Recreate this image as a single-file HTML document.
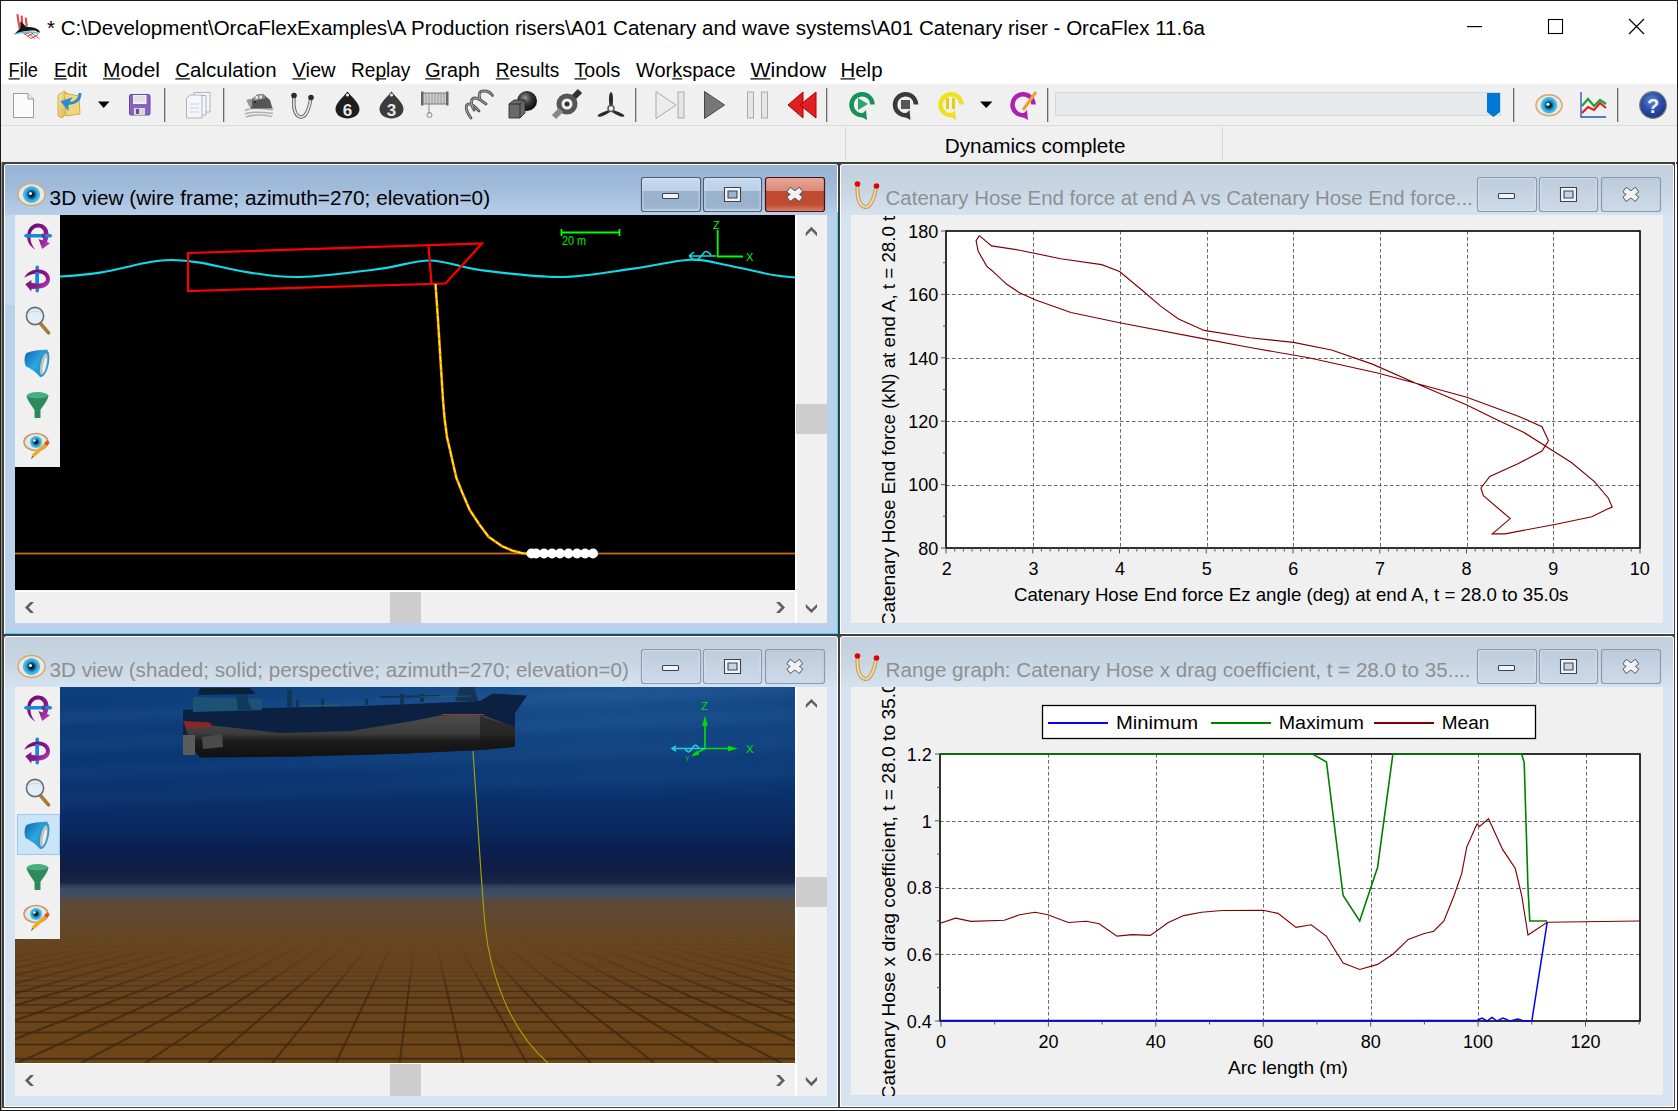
<!DOCTYPE html>
<html><head><meta charset="utf-8"><title>OrcaFlex</title>
<style>html,body{margin:0;padding:0;background:#f0f0f0;overflow:hidden;}svg{display:block;font-family:"Liberation Sans",sans-serif;}</style>
</head><body>
<svg width="1678" height="1111" viewBox="0 0 1678 1111">

<defs>
<linearGradient id="gActT" x1="0" y1="0" x2="0" y2="1">
 <stop offset="0" stop-color="#98b3d4"/><stop offset="0.5" stop-color="#a2bcdb"/><stop offset="1" stop-color="#b8cfe8"/></linearGradient>
<linearGradient id="gInT" x1="0" y1="0" x2="0" y2="1">
 <stop offset="0" stop-color="#c2d0de"/><stop offset="0.5" stop-color="#c8d6e4"/><stop offset="1" stop-color="#d5e3f0"/></linearGradient>
<linearGradient id="gActSide" x1="0" y1="0" x2="0" y2="1">
 <stop offset="0" stop-color="#c3d8ee"/><stop offset="0.25" stop-color="#b8d0ea"/><stop offset="1" stop-color="#b9d1ea"/></linearGradient>
<linearGradient id="gBtnA" x1="0" y1="0" x2="0" y2="1">
 <stop offset="0" stop-color="#c6d8ec"/><stop offset="0.4" stop-color="#bcd0e6"/><stop offset="0.41" stop-color="#9ab3cf"/><stop offset="0.85" stop-color="#9ab2ce"/><stop offset="1" stop-color="#b4cae2"/></linearGradient>
<linearGradient id="gBtnI" x1="0" y1="0" x2="0" y2="1">
 <stop offset="0" stop-color="#bccbdb"/><stop offset="0.5" stop-color="#c5d3e2"/><stop offset="1" stop-color="#cbd9e8"/></linearGradient>
<linearGradient id="gClose" x1="0" y1="0" x2="0" y2="1">
 <stop offset="0" stop-color="#eba799"/><stop offset="0.4" stop-color="#d98a7a"/><stop offset="0.41" stop-color="#bd4a2e"/><stop offset="0.8" stop-color="#c04c32"/><stop offset="1" stop-color="#d88672"/></linearGradient>
<linearGradient id="gSea" gradientUnits="userSpaceOnUse" x1="0" y1="687" x2="0" y2="885">
 <stop offset="0" stop-color="#0c3f7c"/><stop offset="0.45" stop-color="#0a3672"/><stop offset="0.68" stop-color="#0a2a62"/><stop offset="0.83" stop-color="#0b1f4e"/><stop offset="0.93" stop-color="#111d42"/><stop offset="1" stop-color="#1c2848"/></linearGradient>
<linearGradient id="gBed" x1="0" y1="0" x2="0" y2="1">
 <stop offset="0" stop-color="#5c4a3a"/><stop offset="0.25" stop-color="#624426"/><stop offset="1" stop-color="#6e4515"/></linearGradient>
<linearGradient id="gHull" x1="0" y1="0" x2="0" y2="1">
 <stop offset="0" stop-color="#4c4c4c"/><stop offset="0.45" stop-color="#3c3c3c"/><stop offset="0.62" stop-color="#1c1c1c"/><stop offset="1" stop-color="#101010"/></linearGradient>
<radialGradient id="gEye" cx="0.5" cy="0.5" r="0.5">
 <stop offset="0" stop-color="#000"/><stop offset="0.3" stop-color="#0a3050"/><stop offset="0.55" stop-color="#1a8fc8"/><stop offset="0.8" stop-color="#49b8e0"/><stop offset="1" stop-color="#49b8e0"/></radialGradient>
<radialGradient id="gBall" cx="0.4" cy="0.35" r="0.6">
 <stop offset="0" stop-color="#9a9a9a"/><stop offset="0.5" stop-color="#3a3a3a"/><stop offset="1" stop-color="#111"/></radialGradient>
<radialGradient id="gHelp" cx="0.45" cy="0.35" r="0.6">
 <stop offset="0" stop-color="#5a86d8"/><stop offset="0.6" stop-color="#2a4ea8"/><stop offset="1" stop-color="#1a3a8a"/></radialGradient>
<linearGradient id="gFolder" x1="0" y1="0" x2="1" y2="1">
 <stop offset="0" stop-color="#f8e9a0"/><stop offset="1" stop-color="#d9b24a"/></linearGradient>
<linearGradient id="gTrack" x1="0" y1="0" x2="0" y2="1">
 <stop offset="0" stop-color="#e7eaea"/><stop offset="1" stop-color="#e7eaea"/></linearGradient>
<linearGradient id="gFog" x1="0" y1="0" x2="0" y2="1">
 <stop offset="0" stop-color="#5a4a3c" stop-opacity="1"/><stop offset="0.25" stop-color="#62482c" stop-opacity="1"/><stop offset="0.5" stop-color="#67461f" stop-opacity="0.9"/><stop offset="0.75" stop-color="#6a4518" stop-opacity="0.55"/><stop offset="1" stop-color="#6a4518" stop-opacity="0"/></linearGradient>
<linearGradient id="gBand" x1="0" y1="0" x2="0" y2="1">
 <stop offset="0" stop-color="#273552"/><stop offset="0.3" stop-color="#3c4b63"/><stop offset="0.75" stop-color="#414e62"/><stop offset="1" stop-color="#504a42"/></linearGradient>
<radialGradient id="gGlow" cx="0.75" cy="0" r="0.6">
 <stop offset="0" stop-color="#3a7ab8" stop-opacity="0.32"/><stop offset="1" stop-color="#2a6aa8" stop-opacity="0"/></radialGradient>
<linearGradient id="gPurp" x1="0" y1="0" x2="1" y2="1">
 <stop offset="0" stop-color="#6a0a6a"/><stop offset="0.6" stop-color="#8a1a8a"/><stop offset="1" stop-color="#d050d0"/></linearGradient>
<linearGradient id="gMeg" x1="0" y1="0" x2="1" y2="1">
 <stop offset="0" stop-color="#1060a8"/><stop offset="0.5" stop-color="#2aa8e0"/><stop offset="1" stop-color="#1a80c0"/></linearGradient>
<filter id="blur5" x="-10%" y="-50%" width="120%" height="200%"><feGaussianBlur stdDeviation="5"/></filter>
<clipPath id="clipTLv"><rect x="15" y="215" width="780" height="375"/></clipPath>
<clipPath id="clipBLv"><rect x="15" y="687" width="780" height="376"/></clipPath>
<clipPath id="clipTRc"><rect x="851" y="215" width="812" height="408"/></clipPath>
<clipPath id="clipBRc"><rect x="851" y="687" width="812" height="409"/></clipPath>
</defs>

<rect x="0" y="0" width="1678" height="1111" fill="#f0f0f0"/>
<rect x="0" y="0" width="1678" height="84" fill="#ffffff"/>
<rect x="0" y="125" width="1678" height="1" fill="#dadada"/>
<rect x="845" y="127" width="1" height="33" fill="#d7d7d7"/>
<rect x="1222" y="127" width="1" height="33" fill="#d7d7d7"/>
<rect x="2" y="162" width="1675" height="948" fill="#ffffff"/>
<rect x="2" y="162" width="1675" height="2" fill="#404040"/>
<rect x="0.5" y="0.5" width="1677" height="1110" fill="none" stroke="#1a1a1a" stroke-width="1"/>
<rect x="1" y="162" width="1" height="948" fill="#9a9a9a"/>
<g>
<path d="M17.4,14.2 C18,20 19,25 19.7,28.5 M21.6,15.6 L22.3,24 M25.8,17.6 C26,21 26.5,24 26.8,26.5" stroke="#e04a4a" stroke-width="2.1" fill="none"/>
<path d="M23,32.8 L31,38.5 M26.5,32.2 L35,38.6 M30,31.8 L39.5,38.8 M24.5,34.5 L29,32 M27.5,36.5 L33.5,33 M31,38.5 L38,34.5" stroke="#cc4a4a" stroke-width="1" fill="none"/>
<path d="M14.2,33.9 C17,31.5 19.5,29.5 20.3,27.8 C20.6,25.5 20.3,23 20.3,21.3 C22.5,23 24.5,25 26,26.8 C30,27 34,27.5 36,28.5 C38.5,29.5 40,31 39.8,32.8 C38,32.3 36.5,31.2 34.5,30.5 C30,30 24,31 14.2,33.9 Z" fill="#161616"/>
<path d="M14.5,34.2 C22,31.8 30,31 38.8,33.3" stroke="#58c6de" stroke-width="1.4" fill="none"/>
</g>
<text x="47.0" y="34.8" font-size="20.5" fill="#000" textLength="1158.0" lengthAdjust="spacingAndGlyphs">* C:\Development\OrcaFlexExamples\A Production risers\A01 Catenary and wave systems\A01 Catenary riser - OrcaFlex 11.6a</text>
<rect x="1467" y="26" width="15" height="1.2" fill="#000"/>
<rect x="1548.5" y="19.5" width="14" height="14" fill="none" stroke="#000" stroke-width="1.1"/>
<path d="M1629,19 L1644,34 M1644,19 L1629,34" stroke="#000" stroke-width="1.2"/>
<text x="8.6" y="76.8" font-size="20.5" fill="#000" textLength="29.4" lengthAdjust="spacingAndGlyphs">File</text>
<rect x="8.6" y="78.3" width="11.1" height="1.2" fill="#000"/>
<text x="54.0" y="76.8" font-size="20.5" fill="#000" textLength="33.0" lengthAdjust="spacingAndGlyphs">Edit</text>
<rect x="54.0" y="78.3" width="12.8" height="1.2" fill="#000"/>
<text x="103.0" y="76.8" font-size="20.5" fill="#000" textLength="57.0" lengthAdjust="spacingAndGlyphs">Model</text>
<rect x="103.0" y="78.3" width="17.4" height="1.2" fill="#000"/>
<text x="175.3" y="76.8" font-size="20.5" fill="#000" textLength="101.3" lengthAdjust="spacingAndGlyphs">Calculation</text>
<rect x="175.3" y="78.3" width="14.8" height="1.2" fill="#000"/>
<text x="292.4" y="76.8" font-size="20.5" fill="#000" textLength="43.2" lengthAdjust="spacingAndGlyphs">View</text>
<rect x="292.4" y="78.3" width="13.4" height="1.2" fill="#000"/>
<text x="351.0" y="76.8" font-size="20.5" fill="#000" textLength="59.4" lengthAdjust="spacingAndGlyphs">Replay</text>
<rect x="375.4" y="78.3" width="10.6" height="1.2" fill="#000"/>
<text x="425.2" y="76.8" font-size="20.5" fill="#000" textLength="54.8" lengthAdjust="spacingAndGlyphs">Graph</text>
<rect x="425.2" y="78.3" width="15.3" height="1.2" fill="#000"/>
<text x="495.8" y="76.8" font-size="20.5" fill="#000" textLength="63.5" lengthAdjust="spacingAndGlyphs">Results</text>
<rect x="495.8" y="78.3" width="13.7" height="1.2" fill="#000"/>
<text x="574.5" y="76.8" font-size="20.5" fill="#000" textLength="45.7" lengthAdjust="spacingAndGlyphs">Tools</text>
<rect x="574.5" y="78.3" width="12.0" height="1.2" fill="#000"/>
<text x="636.0" y="76.8" font-size="20.5" fill="#000" textLength="99.5" lengthAdjust="spacingAndGlyphs">Workspace</text>
<rect x="672.2" y="78.3" width="10.0" height="1.2" fill="#000"/>
<text x="750.4" y="76.8" font-size="20.5" fill="#000" textLength="75.8" lengthAdjust="spacingAndGlyphs">Window</text>
<rect x="750.4" y="78.3" width="20.1" height="1.2" fill="#000"/>
<text x="840.5" y="76.8" font-size="20.5" fill="#000" textLength="42.0" lengthAdjust="spacingAndGlyphs">Help</text>
<rect x="840.5" y="78.3" width="14.7" height="1.2" fill="#000"/>
<rect x="164" y="88" width="1.3" height="34" fill="#6a6a6a"/>
<rect x="223" y="88" width="1.3" height="34" fill="#6a6a6a"/>
<rect x="635" y="88" width="1.3" height="34" fill="#6a6a6a"/>
<rect x="826" y="88" width="1.3" height="34" fill="#6a6a6a"/>
<rect x="1047" y="88" width="1.3" height="34" fill="#6a6a6a"/>
<rect x="1513" y="88" width="1.3" height="34" fill="#6a6a6a"/>
<rect x="1617" y="88" width="1.3" height="34" fill="#6a6a6a"/>
<path d="M13.5,93.5 H28 L33.5,99 V117.5 H13.5 Z" fill="#fbfbfb" stroke="#9a9a9a"/><path d="M28,93.5 V99 H33.5" fill="#e8e8e8" stroke="#9a9a9a"/>
<path d="M58,95 L64,91 L67,93 L67,113 L62,118 L58,116 Z" fill="url(#gFolder)" stroke="#c9a23a" stroke-width="0.8"/><path d="M64,93 L79,96 L80,114 L66,116 Z" fill="#f2d67a" stroke="#c9a23a" stroke-width="0.8"/><path d="M80,93 C80,101 74,104 67,103 L69,100 L63,102 L67,107 L67,104" stroke="#2a8ad8" stroke-width="3" fill="none"/>
<path d="M98,101.5 H109.5 L103.7,108 Z" fill="#000"/>
<rect x="129.5" y="94.5" width="20.5" height="20.5" rx="1.5" fill="#8a62c0" stroke="#6a4aa0"/><rect x="133" y="95" width="13.5" height="9" fill="#f2f2f2"/><path d="M134,97 H145 M134,99 H145 M134,101 H145" stroke="#c9c9c9" stroke-width="0.8"/><rect x="134" y="108" width="11" height="7" fill="#d8d8d8"/><rect x="136" y="109" width="3" height="5" fill="#6a4aa0"/>
<g fill="#f4f6fa" stroke="#a6acb8" stroke-width="0.9"><path d="M194,92.5 H210 V112 H194 Z"/><path d="M190,95.5 H206 V115 H190 Z"/><path d="M186.5,98.5 L190,95 H202 V118 H186.5 Z"/></g><path d="M190,104 H199 M190,108 H199 M190,112 H199" stroke="#c6cbd6" stroke-width="0.8"/>
<g><path d="M245,110.5 C251,107.5 262,108 273,110 M245,114 C252,111 262,112 273,113.5 M246,117 C254,114 264,115 272,116.5" stroke="#b0b0b0" stroke-width="1.6" fill="none"/><path d="M246.5,100 L252,99 L257,95 L263,94 L270,100 L272,107 L273,108.5 L251,108.5 Z" fill="#555"/><path d="M252,99 L257,94.5 L263,94 L266,98 L254,101 Z" fill="#8a8a8a"/><rect x="255.5" y="96" width="2.5" height="3" fill="#e8e8e8"/><rect x="259.5" y="95.5" width="2.5" height="3" fill="#e8e8e8"/><path d="M246.5,100 L252,99 L252,107 L249,106 Z" fill="#9a9a9a"/><circle cx="255" cy="102" r="0.9" fill="#111"/></g>
<path d="M294,95.5 C293.5,106 293.5,112 298,116 C303,119 308,116 311,97.5" stroke="#6a6a6a" stroke-width="3.6" fill="none"/><path d="M294,95.5 C293.5,106 293.5,112 298,116 C303,119 308,116 311,97.5" stroke="#e6e6e6" stroke-width="1.6" fill="none"/><circle cx="294" cy="95.5" r="2.8" fill="#2a2a2a"/><circle cx="311" cy="97.5" r="2.8" fill="#2a2a2a"/>
<path d="M347.5,91.5 C343.5,97 335.5,103 335.5,109 C335.5,115 341.5,118.5 347.5,118.5 C353.5,118.5 359.5,115 359.5,109 C359.5,103 351.5,97 347.5,91.5 Z" fill="#1e1e1e"/>
<circle cx="347.5" cy="95" r="1.6" fill="#eee"/>
<text x="347.5" y="116" font-size="17" font-weight="bold" fill="#e8e8e8" text-anchor="middle">6</text>
<path d="M391.5,91.5 C387.5,97 379.5,103 379.5,109 C379.5,115 385.5,118.5 391.5,118.5 C397.5,118.5 403.5,115 403.5,109 C403.5,103 395.5,97 391.5,91.5 Z" fill="#3c3c3c"/>
<circle cx="391.5" cy="95" r="1.6" fill="#eee"/>
<text x="391.5" y="116" font-size="17" font-weight="bold" fill="#e8e8e8" text-anchor="middle">3</text>
<rect x="422" y="93" width="25" height="11" rx="2" fill="#cfcfcf" stroke="#777"/><path d="M426,93 V104 M429,93 V104 M432,93 V104 M435,93 V104 M438,93 V104 M441,93 V104 M444,93 V104" stroke="#8a8a8a" stroke-width="0.8"/><rect x="421" y="91.5" width="2.5" height="14" fill="#666"/><rect x="446" y="91.5" width="2.5" height="14" fill="#666"/><path d="M429,104 V114" stroke="#888"/><circle cx="429.5" cy="115" r="2.5" fill="none" stroke="#888"/>
<path d="M471,118 C465,110 465,104 469,104 C473,104 477,109 479,111 M474,110 C470,103 471,98 475,98 C479,98 483,102 486,104 M480,99 C478,93 480,91 484,91 C488,91 491,93 492.5,95.5" stroke="#555" stroke-width="2.8" fill="none" stroke-linecap="round"/><path d="M471,118 C465,110 465,104 469,104 C473,104 477,109 479,111 M474,110 C470,103 471,98 475,98 C479,98 483,102 486,104 M480,99 C478,93 480,91 484,91 C488,91 491,93 492.5,95.5" stroke="#aaa" stroke-width="1" fill="none"/>
<circle cx="527" cy="101" r="10" fill="url(#gBall)"/><path d="M509,104 L514,100 H525 V113 L520,118 H509 Z" fill="#6a6a6a" stroke="#222" stroke-width="0.8"/><path d="M509,104 H520 V118 M520,104 L525,100" stroke="#222" stroke-width="0.8" fill="none"/>
<circle cx="567" cy="104" r="8" fill="none" stroke="#555" stroke-width="5"/><circle cx="567" cy="104" r="2.5" fill="#333"/><path d="M574,97 L580,91" stroke="#333" stroke-width="6"/><path d="M561,110 L554,117" stroke="#888" stroke-width="6"/>
<g fill="#2a2a2a"><path d="M609.5,106 C608.5,98 609,93 611,92 C613,93 613.5,98 612.5,106 Z"/><path d="M613,110 C619,112 624,114 624.5,116 C623,118 618,116 612,112 Z"/><path d="M609,110 C603,112 598,114 597.5,116 C599,118 604,116 610,112 Z"/></g><circle cx="611" cy="108.5" r="3" fill="#f0f0f0" stroke="#555" stroke-width="1.5"/>
<path d="M656,91.5 L676,105 L656,118.5 Z" fill="#ececec" stroke="#aaa"/><rect x="678" y="92" width="6" height="26" fill="#e6e6e6" stroke="#aaa"/>
<path d="M704.5,91.5 L724.5,105 L704.5,118.5 Z" fill="#777" stroke="#444"/>
<rect x="747.5" y="92" width="6" height="26" fill="#e6e6e6" stroke="#aaa"/><rect x="761.5" y="92" width="6" height="26" fill="#e6e6e6" stroke="#aaa"/>
<path d="M788,105 L803,92 V118 Z" fill="#e02020" stroke="#a00"/><path d="M800,105 L816,92 V118 Z" fill="#e02020" stroke="#a00"/>
<path d="M872.5,104.5 A10.5,10.5 0 1,0 864,115" stroke="#18905a" stroke-width="4.5" fill="none"/><path d="M866,110 L860,116 L867,120 Z" fill="#18905a"/>
<path d="M858,98 L868,104 L858,110 Z" fill="#2aa86a"/>
<path d="M916.0,104.5 A10.5,10.5 0 1,0 907.5,115" stroke="#3a3a3a" stroke-width="4.5" fill="none"/><path d="M909.5,110 L903.5,116 L910.5,120 Z" fill="#3a3a3a"/>
<rect x="901" y="100" width="9" height="9" fill="#555"/>
<path d="M961.5,104.5 A10.5,10.5 0 1,0 953,115" stroke="#f0e020" stroke-width="4.5" fill="none"/><path d="M955,110 L949,116 L956,120 Z" fill="#f0e020"/>
<rect x="946" y="98" width="3" height="11" fill="#e0d010"/><rect x="952" y="98" width="3" height="11" fill="#e0d010"/>
<path d="M980,101.5 H992.5 L986.2,108 Z" fill="#000"/>
<path d="M1033.5,104.5 A10.5,10.5 0 1,0 1025,115" stroke="#b020b0" stroke-width="4.5" fill="none"/><path d="M1027,110 L1021,116 L1028,120 Z" fill="#b020b0"/>
<path d="M1023,110 L1036,92" stroke="#f0a030" stroke-width="3"/>
<rect x="1055.5" y="92.5" width="445" height="23" fill="#e7eaea" stroke="#d6d6d6"/>
<path d="M1487,93 H1500 V112 L1493.5,117 L1487,112 Z" fill="#0078d7"/>
<ellipse cx="1549" cy="105.3" rx="13" ry="10.5" fill="#e8e8e8" stroke="#d8a868" stroke-width="1.5"/><circle cx="1549" cy="105.3" r="8.2" fill="url(#gEye)"/><circle cx="1548" cy="104.3" r="1.6" fill="#fff"/>
<path d="M1581,92 V117 H1606" stroke="#2050c0" stroke-width="1.3" fill="none"/><path d="M1582,106 L1588,99 L1594,106 L1600,100 L1606,104" stroke="#20a030" stroke-width="2.2" fill="none"/><path d="M1582,113 L1588,107 L1594,110 L1600,103 L1606,108" stroke="#e02020" stroke-width="2.2" fill="none"/>
<circle cx="1653" cy="105" r="13.3" fill="url(#gHelp)" stroke="#7a7a7a" stroke-width="1.2"/><text x="1653" y="112.5" font-size="20" font-weight="bold" fill="#f0f0f0" text-anchor="middle">?</text>
<text x="944.8" y="153.4" font-size="20.5" fill="#000" textLength="180.8" lengthAdjust="spacingAndGlyphs">Dynamics complete</text>
<rect x="2" y="162" width="838" height="474" rx="4" fill="#404040"/>
<rect x="2" y="182" width="838" height="454" fill="#404040"/>
<rect x="4" y="164" width="834" height="470" rx="3" fill="#ffffff"/>
<rect x="4" y="182" width="834" height="452" fill="#ffffff"/>
<rect x="837" y="212" width="1" height="422" fill="#38d8f8"/>
<rect x="5" y="633" width="833" height="1" fill="#38d8f8"/>
<rect x="5" y="165" width="832" height="468" rx="2" fill="#b9d1ea"/>
<rect x="5" y="182" width="832" height="451" fill="#b9d1ea"/>
<rect x="5" y="215" width="10" height="90" fill="#c6daef"/>
<rect x="5" y="165" width="832" height="50" rx="2" fill="url(#gActT)"/>
<ellipse cx="31.5" cy="194.5" rx="13.5" ry="11" fill="#e8e8e8" stroke="#d8a868" stroke-width="1.5"/><circle cx="31.5" cy="194.5" r="8.6" fill="url(#gEye)"/><circle cx="30.5" cy="193.5" r="1.6" fill="#fff"/>
<text x="49.6" y="204.5" font-size="20.5" fill="#000" textLength="440.5" lengthAdjust="spacingAndGlyphs">3D view (wire frame; azimuth=270; elevation=0)</text>
<rect x="641.5" y="177.5" width="59" height="34" rx="2.5" fill="url(#gBtnA)" stroke="#4d5d72" stroke-width="1.2"/>
<rect x="642.8" y="178.8" width="56.4" height="31.4" rx="1.5" fill="none" stroke="#e6eef8" stroke-opacity="0.6" stroke-width="1"/>
<rect x="703.5" y="177.5" width="58" height="34" rx="2.5" fill="url(#gBtnA)" stroke="#4d5d72" stroke-width="1.2"/>
<rect x="704.8" y="178.8" width="55.4" height="31.4" rx="1.5" fill="none" stroke="#e6eef8" stroke-opacity="0.6" stroke-width="1"/>
<rect x="662.5" y="193.5" width="16" height="5" rx="1" fill="#f4f4f4" stroke="#3a4456" stroke-width="1.1"/>
<path d="M724.5,187.5 h16 v14 h-16 Z M728,191 h9 v7 h-9 Z" fill="#f4f4f4" fill-rule="evenodd" stroke="#3a4456" stroke-width="1.1"/>
<rect x="765.5" y="177.5" width="59" height="34" rx="2.5" fill="url(#gClose)" stroke="#4a1018" stroke-width="1.2"/>
<polygon points="799.26,201.04 802.33,197.09 790.34,187.76 787.27,191.71" fill="#3a4456" stroke="#3a4456" stroke-width="1.3" stroke-linejoin="round"/>
<polygon points="787.27,197.09 790.34,201.04 802.33,191.71 799.26,187.76" fill="#3a4456" stroke="#3a4456" stroke-width="1.3" stroke-linejoin="round"/>
<polygon points="799.26,201.04 802.33,197.09 790.34,187.76 787.27,191.71" fill="#f2f2f2"/>
<polygon points="787.27,197.09 790.34,201.04 802.33,191.71 799.26,187.76" fill="#f2f2f2"/>
<rect x="15" y="215" width="812" height="408" fill="#f0f0f0"/>
<rect x="838" y="162" width="838" height="474" rx="4" fill="#404040"/>
<rect x="838" y="182" width="838" height="454" fill="#404040"/>
<rect x="840" y="164" width="834" height="470" rx="3" fill="#ffffff"/>
<rect x="840" y="182" width="834" height="452" fill="#ffffff"/>
<rect x="841" y="165" width="832" height="468" rx="2" fill="#d6e4f2"/>
<rect x="841" y="182" width="832" height="451" fill="#d6e4f2"/>
<rect x="841" y="165" width="832" height="50" rx="2" fill="url(#gInT)"/>
<path d="M857.5,184 C857,196 858,205 865,207 C871,208 874,198 876.5,186" stroke="#c8a060" stroke-width="4" fill="none"/>
<path d="M857.5,184 C857,196 858,205 865,207 C871,208 874,198 876.5,186" stroke="#f2dcae" stroke-width="1.6" fill="none"/>
<circle cx="857.5" cy="184" r="2.8" fill="#e00000"/><circle cx="876.5" cy="186" r="2.8" fill="#e00000"/>
<text x="885.6" y="204.5" font-size="20.5" fill="#8f8f8f" textLength="587.2" lengthAdjust="spacingAndGlyphs">Catenary Hose End force at end A vs Catenary Hose End force...</text>
<rect x="1477.5" y="177.5" width="59" height="34" rx="2.5" fill="url(#gBtnI)" stroke="#8a9ab0" stroke-width="1.2"/>
<rect x="1478.8" y="178.8" width="56.4" height="31.4" rx="1.5" fill="none" stroke="#e6eef8" stroke-opacity="0.6" stroke-width="1"/>
<rect x="1539.5" y="177.5" width="58" height="34" rx="2.5" fill="url(#gBtnI)" stroke="#8a9ab0" stroke-width="1.2"/>
<rect x="1540.8" y="178.8" width="55.4" height="31.4" rx="1.5" fill="none" stroke="#e6eef8" stroke-opacity="0.6" stroke-width="1"/>
<rect x="1498.5" y="193.5" width="16" height="5" rx="1" fill="#f4f4f4" stroke="#3a4456" stroke-width="1.1"/>
<path d="M1560.5,187.5 h16 v14 h-16 Z M1564,191 h9 v7 h-9 Z" fill="#f4f4f4" fill-rule="evenodd" stroke="#3a4456" stroke-width="1.1"/>
<rect x="1601.5" y="177.5" width="59" height="34" rx="2.5" fill="url(#gBtnI)" stroke="#8a9ab0" stroke-width="1.2"/>
<polygon points="1635.26,201.04 1638.33,197.09 1626.34,187.76 1623.27,191.71" fill="#3a4456" stroke="#3a4456" stroke-width="1.3" stroke-linejoin="round"/>
<polygon points="1623.27,197.09 1626.34,201.04 1638.33,191.71 1635.26,187.76" fill="#3a4456" stroke="#3a4456" stroke-width="1.3" stroke-linejoin="round"/>
<polygon points="1635.26,201.04 1638.33,197.09 1626.34,187.76 1623.27,191.71" fill="#f2f2f2"/>
<polygon points="1623.27,197.09 1626.34,201.04 1638.33,191.71 1635.26,187.76" fill="#f2f2f2"/>
<rect x="851" y="215" width="812" height="408" fill="#f0f0f0"/>
<rect x="2" y="634" width="838" height="474" rx="4" fill="#404040"/>
<rect x="2" y="654" width="838" height="454" fill="#404040"/>
<rect x="4" y="636" width="834" height="470" rx="3" fill="#ffffff"/>
<rect x="4" y="654" width="834" height="452" fill="#ffffff"/>
<rect x="5" y="637" width="832" height="468" rx="2" fill="#d6e4f2"/>
<rect x="5" y="654" width="832" height="451" fill="#d6e4f2"/>
<rect x="5" y="637" width="832" height="50" rx="2" fill="url(#gInT)"/>
<ellipse cx="31.5" cy="666.5" rx="13.5" ry="11" fill="#e8e8e8" stroke="#d8a868" stroke-width="1.5"/><circle cx="31.5" cy="666.5" r="8.6" fill="url(#gEye)"/><circle cx="30.5" cy="665.5" r="1.6" fill="#fff"/>
<text x="49.6" y="676.5" font-size="20.5" fill="#8f8f8f" textLength="579.3" lengthAdjust="spacingAndGlyphs">3D view (shaded; solid; perspective; azimuth=270; elevation=0)</text>
<rect x="641.5" y="649.5" width="59" height="34" rx="2.5" fill="url(#gBtnI)" stroke="#8a9ab0" stroke-width="1.2"/>
<rect x="642.8" y="650.8" width="56.4" height="31.4" rx="1.5" fill="none" stroke="#e6eef8" stroke-opacity="0.6" stroke-width="1"/>
<rect x="703.5" y="649.5" width="58" height="34" rx="2.5" fill="url(#gBtnI)" stroke="#8a9ab0" stroke-width="1.2"/>
<rect x="704.8" y="650.8" width="55.4" height="31.4" rx="1.5" fill="none" stroke="#e6eef8" stroke-opacity="0.6" stroke-width="1"/>
<rect x="662.5" y="665.5" width="16" height="5" rx="1" fill="#f4f4f4" stroke="#3a4456" stroke-width="1.1"/>
<path d="M724.5,659.5 h16 v14 h-16 Z M728,663 h9 v7 h-9 Z" fill="#f4f4f4" fill-rule="evenodd" stroke="#3a4456" stroke-width="1.1"/>
<rect x="765.5" y="649.5" width="59" height="34" rx="2.5" fill="url(#gBtnI)" stroke="#8a9ab0" stroke-width="1.2"/>
<polygon points="799.26,673.04 802.33,669.09 790.34,659.76 787.27,663.71" fill="#3a4456" stroke="#3a4456" stroke-width="1.3" stroke-linejoin="round"/>
<polygon points="787.27,669.09 790.34,673.04 802.33,663.71 799.26,659.76" fill="#3a4456" stroke="#3a4456" stroke-width="1.3" stroke-linejoin="round"/>
<polygon points="799.26,673.04 802.33,669.09 790.34,659.76 787.27,663.71" fill="#f2f2f2"/>
<polygon points="787.27,669.09 790.34,673.04 802.33,663.71 799.26,659.76" fill="#f2f2f2"/>
<rect x="15" y="687" width="812" height="408" fill="#f0f0f0"/>
<rect x="838" y="634" width="838" height="474" rx="4" fill="#404040"/>
<rect x="838" y="654" width="838" height="454" fill="#404040"/>
<rect x="840" y="636" width="834" height="470" rx="3" fill="#ffffff"/>
<rect x="840" y="654" width="834" height="452" fill="#ffffff"/>
<rect x="841" y="637" width="832" height="468" rx="2" fill="#d6e4f2"/>
<rect x="841" y="654" width="832" height="451" fill="#d6e4f2"/>
<rect x="841" y="637" width="832" height="50" rx="2" fill="url(#gInT)"/>
<path d="M857.5,656 C857,668 858,677 865,679 C871,680 874,670 876.5,658" stroke="#c8a060" stroke-width="4" fill="none"/>
<path d="M857.5,656 C857,668 858,677 865,679 C871,680 874,670 876.5,658" stroke="#f2dcae" stroke-width="1.6" fill="none"/>
<circle cx="857.5" cy="656" r="2.8" fill="#e00000"/><circle cx="876.5" cy="658" r="2.8" fill="#e00000"/>
<text x="885.6" y="676.5" font-size="20.5" fill="#8f8f8f" textLength="585.0" lengthAdjust="spacingAndGlyphs">Range graph: Catenary Hose x drag coefficient, t = 28.0 to 35....</text>
<rect x="1477.5" y="649.5" width="59" height="34" rx="2.5" fill="url(#gBtnI)" stroke="#8a9ab0" stroke-width="1.2"/>
<rect x="1478.8" y="650.8" width="56.4" height="31.4" rx="1.5" fill="none" stroke="#e6eef8" stroke-opacity="0.6" stroke-width="1"/>
<rect x="1539.5" y="649.5" width="58" height="34" rx="2.5" fill="url(#gBtnI)" stroke="#8a9ab0" stroke-width="1.2"/>
<rect x="1540.8" y="650.8" width="55.4" height="31.4" rx="1.5" fill="none" stroke="#e6eef8" stroke-opacity="0.6" stroke-width="1"/>
<rect x="1498.5" y="665.5" width="16" height="5" rx="1" fill="#f4f4f4" stroke="#3a4456" stroke-width="1.1"/>
<path d="M1560.5,659.5 h16 v14 h-16 Z M1564,663 h9 v7 h-9 Z" fill="#f4f4f4" fill-rule="evenodd" stroke="#3a4456" stroke-width="1.1"/>
<rect x="1601.5" y="649.5" width="59" height="34" rx="2.5" fill="url(#gBtnI)" stroke="#8a9ab0" stroke-width="1.2"/>
<polygon points="1635.26,673.04 1638.33,669.09 1626.34,659.76 1623.27,663.71" fill="#3a4456" stroke="#3a4456" stroke-width="1.3" stroke-linejoin="round"/>
<polygon points="1623.27,669.09 1626.34,673.04 1638.33,663.71 1635.26,659.76" fill="#3a4456" stroke="#3a4456" stroke-width="1.3" stroke-linejoin="round"/>
<polygon points="1635.26,673.04 1638.33,669.09 1626.34,659.76 1623.27,663.71" fill="#f2f2f2"/>
<polygon points="1623.27,669.09 1626.34,673.04 1638.33,663.71 1635.26,659.76" fill="#f2f2f2"/>
<rect x="851" y="687" width="812" height="408" fill="#f0f0f0"/>
<rect x="1675" y="162" width="1" height="947" fill="#ffffff"/>
<rect x="5" y="1105" width="832" height="1" fill="#d6e4f2"/><rect x="841" y="1105" width="832" height="1" fill="#d6e4f2"/>
<rect x="4" y="1106" width="834" height="1" fill="#ffffff"/><rect x="840" y="1106" width="834" height="1" fill="#ffffff"/>
<rect x="15" y="215" width="780" height="375" fill="#000"/>
<g clip-path="url(#clipTLv)">
<rect x="15" y="552.6" width="780" height="1.8" fill="#d06a10"/>
<path d="M15,277 C22.5,276.9 45.8,277.2 60,276.5 C74.2,275.8 85.0,275.0 100,272.6 C115.0,270.2 138.0,264.1 150,262 C162.0,259.9 163.7,259.9 172,260 C180.3,260.1 187.0,260.5 200,262.6 C213.0,264.7 233.3,270.2 250,272.6 C266.7,275.0 278.3,277.6 300,277 C321.7,276.4 358.3,271.6 380,268.9 C401.7,266.1 413.3,260.3 430,260.5 C446.7,260.7 458.3,267.2 480,270 C501.7,272.8 534.5,277.2 560,277 C585.5,276.8 611.3,271.5 633,268.6 C654.7,265.7 674.5,260.3 690,259.7 C705.5,259.1 712.2,262.4 726,265 C739.8,267.6 761.3,272.9 773,275 C784.7,277.1 792.2,277.1 796,277.5" fill="none" stroke="#10dce8" stroke-width="2.1"/>
<path d="M188,253 L482,243.5 L445.5,283.5 L188,291 Z M428.5,246.3 L431.5,283.8" fill="none" stroke="#ff0000" stroke-width="2.2"/>
<path d="M435.5,284 L438,320 L440.5,360 L443,400 L444.5,418 L447,437 L450,450 L456.3,477.7 L462,492 L469.7,510 L479,524 L488.5,536.7 L501.9,546.1 L512,550.5 L523.3,553.4 L528,553.6" fill="none" stroke="#ff9a00" stroke-width="2.6"/>
<path d="M435.5,284 L438,320 L440.5,360 L443,400 L444.5,418 L447,437 L450,450 L456.3,477.7 L462,492 L469.7,510 L479,524 L488.5,536.7 L501.9,546.1 L512,550.5 L523.3,553.4 L528,553.6" fill="none" stroke="#ffff20" stroke-width="1.2" stroke-dasharray="6 2"/>
<circle cx="531.5" cy="553.5" r="5" fill="#fff"/>
<circle cx="536" cy="553.5" r="5" fill="#fff"/>
<circle cx="544" cy="553.5" r="5" fill="#fff"/>
<circle cx="552" cy="553.5" r="5" fill="#fff"/>
<circle cx="560" cy="553.5" r="5" fill="#fff"/>
<circle cx="568.5" cy="553.5" r="5" fill="#fff"/>
<circle cx="577" cy="553.5" r="5" fill="#fff"/>
<circle cx="585" cy="553.5" r="5" fill="#fff"/>
<circle cx="593" cy="553.5" r="5" fill="#fff"/>
<path d="M561.5,229 V236 M561.5,232.5 H619.5 M619.5,229 V236" stroke="#00ff00" stroke-width="1.8" fill="none"/>
<text x="562" y="244.5" font-size="12.5" fill="#00ee00" textLength="24" lengthAdjust="spacingAndGlyphs">20 m</text>
<path d="M717.7,230 V256.5 H743" stroke="#00ff00" stroke-width="1.8" fill="none"/>
<text x="713" y="228.5" font-size="11" fill="#00ff00">Z</text><text x="746" y="260.5" font-size="11" fill="#00ff00">X</text>
<path d="M689,256 H716 M689,256 L694,252 M689,256 L694,260 M694,259 C697,262 700,257 703,254 C705,250 708,251 711,255" stroke="#10dce8" stroke-width="1.6" fill="none"/>
</g>
<rect x="15" y="215" width="45" height="252" fill="#f0f0f0"/>
<g transform="translate(0,0)"><path d="M35.7,249.7 C29,246 26,240 27.5,233 C29,226 34,223.5 38,223.5 C44,223.5 48.5,228 48.5,234 C48.5,237 47.8,240 47,242 L50.1,243.2 L42.2,249 L38.6,238.9 L42.5,240.5 C43.5,238 44,236 44,234 C44,230 41.5,227.5 38,227.5 C34,227.5 31,231 30.5,235 C30,241 32,246 35.7,249.7 Z" fill="url(#gPurp)"/><rect x="24.2" y="234" width="27.8" height="3.4" rx="1.7" fill="#1a88d8"/><rect x="42" y="233.5" width="3" height="4.4" fill="#7a1a7a" opacity="0.7"/><rect x="35.5" y="265.5" width="3.5" height="27" rx="1.7" fill="#1a88d8"/><path d="M24.2,277.8 C27,272 33,269.5 38.6,269.5 C45,269.5 50,273.5 50,279.2 C50,284.5 46,287.5 40,288.5 L31.4,289 L31.4,291.5 L25.3,284.3 L31.4,280 L31.4,283 L40,283.5 C44,283 46,281.5 46,279 C46,275.5 42.5,273.5 38.6,273.5 C33,273.5 27.5,275.5 24.2,277.8 Z" fill="url(#gPurp)"/><rect x="35.5" y="272" width="3.5" height="12" fill="#1a88d8"/><path d="M40.5,323.5 L48.5,332.8" stroke="#a87838" stroke-width="3.6" stroke-linecap="round"/><circle cx="35" cy="316" r="8.6" fill="#e2eefa" stroke="#6e6e6e" stroke-width="1.6"/><path d="M28.5,313 C31,311 39,311 41.5,313" stroke="#b8d4f0" stroke-width="1.2" fill="none"/><path d="M26.5,353 C24,356 24,363 26,366.5 C31,368.5 37,373 40.5,377.5 L47.5,349.5 C40,350 32,350.5 26.5,353 Z" fill="url(#gMeg)"/><ellipse cx="43.6" cy="363.5" rx="5.2" ry="13.8" transform="rotate(12 43.6 363.5)" fill="#2a98cc"/><ellipse cx="43.8" cy="364" rx="3.2" ry="11" transform="rotate(12 43.8 364)" fill="#c0c0c0"/><ellipse cx="44.6" cy="365" rx="1.5" ry="8" transform="rotate(12 44.6 365)" fill="#eeeeee"/><ellipse cx="37.5" cy="396" rx="11" ry="4" fill="#48b080"/><path d="M26.5,396 C28,402 33,407 34.5,410 V418 H40.5 V410 C42,407 47,402 48.5,396 C45,399 30,399 26.5,396 Z" fill="#2e8a5a"/><ellipse cx="36" cy="442" rx="12" ry="8.5" fill="#e6e6e6" stroke="#c89a68" stroke-width="1.6"/><circle cx="36" cy="442" r="6" fill="url(#gEye)"/><circle cx="34.5" cy="440.5" r="1.2" fill="#fff"/><path d="M33,456 L47,443" stroke="#f0a828" stroke-width="3.6"/><path d="M45.5,444.5 L48.5,441.5" stroke="#d84a28" stroke-width="3.6"/><path d="M33,456 L31.5,458.5" stroke="#555" stroke-width="1.2"/></g>
<rect x="795" y="215" width="2" height="408" fill="#ffffff"/>
<rect x="15" y="591" width="782" height="1" fill="#ffffff"/>
<rect x="797" y="215" width="30" height="408" fill="#f0f0f0"/>
<rect x="15" y="592" width="780" height="31" fill="#f0f0f0"/>
<polygon points="805.8,236.2 811.4,230.6 817.0,236.2 817.0,232.4 811.4,226.8 805.8,232.4" fill="#606060"/>
<polygon points="805.8,603.9 811.4,609.5 817.0,603.9 817.0,607.5 811.4,613.1 805.8,607.5" fill="#606060"/>
<polygon points="34.0,602.0 30.3,602.0 25.0,607.5 30.3,613.0 34.0,613.0 28.7,607.5" fill="#606060"/>
<polygon points="776.0,602.0 779.7,602.0 785.0,607.5 779.7,613.0 776.0,613.0 781.3,607.5" fill="#606060"/>
<rect x="390" y="592" width="31" height="31" fill="#cdcdcd"/>
<rect x="796" y="404" width="31" height="30" fill="#cdcdcd"/>
<g clip-path="url(#clipBLv)">
<rect x="15" y="687" width="780" height="376" fill="url(#gSea)"/>
<rect x="15" y="687" width="780" height="200" fill="url(#gGlow)"/>
<g filter="url(#blur5)">
<path d="M15,715 C250,705 500,695 795,683 L795,693 C500,705 250,715 15,725 Z" fill="#6aa8e0" fill-opacity="0.1"/>
<path d="M15,742 C250,732 500,722 795,710 L795,720 C500,732 250,742 15,752 Z" fill="#6aa8e0" fill-opacity="0.08"/>
<path d="M15,770 C250,760 500,750 795,738 L795,748 C500,760 250,770 15,780 Z" fill="#6aa8e0" fill-opacity="0.06"/>
<path d="M15,798 C250,788 500,778 795,766 L795,776 C500,788 250,798 15,808 Z" fill="#6aa8e0" fill-opacity="0.05"/>
</g>
<rect x="15" y="884" width="780" height="16" fill="url(#gBand)"/>
<rect x="15" y="899" width="780" height="164" fill="url(#gBed)"/>
<rect x="15" y="1057.75" width="780" height="2.12" fill="#3f2912" fill-opacity="0.85"/>
<rect x="15" y="1043.60" width="780" height="1.93" fill="#3f2912" fill-opacity="0.85"/>
<rect x="15" y="1031.54" width="780" height="1.77" fill="#3f2912" fill-opacity="0.85"/>
<rect x="15" y="1021.15" width="780" height="1.63" fill="#3f2912" fill-opacity="0.85"/>
<rect x="15" y="1012.10" width="780" height="1.50" fill="#3f2912" fill-opacity="0.85"/>
<rect x="15" y="1004.16" width="780" height="1.40" fill="#3f2912" fill-opacity="0.85"/>
<rect x="15" y="997.12" width="780" height="1.30" fill="#3f2912" fill-opacity="0.85"/>
<rect x="15" y="990.84" width="780" height="1.22" fill="#3f2912" fill-opacity="0.80"/>
<rect x="15" y="985.21" width="780" height="1.14" fill="#3f2912" fill-opacity="0.72"/>
<rect x="15" y="980.12" width="780" height="1.08" fill="#3f2912" fill-opacity="0.65"/>
<rect x="15" y="975.51" width="780" height="1.01" fill="#3f2912" fill-opacity="0.58"/>
<rect x="15" y="971.31" width="780" height="0.96" fill="#3f2912" fill-opacity="0.52"/>
<rect x="15" y="967.47" width="780" height="0.91" fill="#3f2912" fill-opacity="0.47"/>
<rect x="15" y="963.93" width="780" height="0.90" fill="#3f2912" fill-opacity="0.42"/>
<rect x="15" y="960.65" width="780" height="0.90" fill="#3f2912" fill-opacity="0.37"/>
<rect x="15" y="957.63" width="780" height="0.90" fill="#3f2912" fill-opacity="0.33"/>
<rect x="15" y="954.82" width="780" height="0.90" fill="#3f2912" fill-opacity="0.29"/>
<rect x="15" y="952.21" width="780" height="0.90" fill="#3f2912" fill-opacity="0.25"/>
<rect x="15" y="949.78" width="780" height="0.90" fill="#3f2912" fill-opacity="0.22"/>
<rect x="15" y="947.51" width="780" height="0.90" fill="#3f2912" fill-opacity="0.18"/>
<rect x="15" y="945.38" width="780" height="0.90" fill="#3f2912" fill-opacity="0.15"/>
<rect x="15" y="943.39" width="780" height="0.90" fill="#3f2912" fill-opacity="0.13"/>
<rect x="15" y="941.51" width="780" height="0.90" fill="#3f2912" fill-opacity="0.10"/>
<rect x="15" y="939.74" width="780" height="0.90" fill="#3f2912" fill-opacity="0.07"/>
<path d="M-2148.4,1063 L-270.0,930" stroke="#3f2912" stroke-width="2" stroke-opacity="0.8"/>
<path d="M-2084.7,1063 L-252.9,930" stroke="#3f2912" stroke-width="2" stroke-opacity="0.8"/>
<path d="M-2021.0,1063 L-235.7,930" stroke="#3f2912" stroke-width="2" stroke-opacity="0.8"/>
<path d="M-1957.3,1063 L-218.6,930" stroke="#3f2912" stroke-width="2" stroke-opacity="0.8"/>
<path d="M-1893.6,1063 L-201.4,930" stroke="#3f2912" stroke-width="2" stroke-opacity="0.8"/>
<path d="M-1829.9,1063 L-184.3,930" stroke="#3f2912" stroke-width="2" stroke-opacity="0.8"/>
<path d="M-1766.2,1063 L-167.1,930" stroke="#3f2912" stroke-width="2" stroke-opacity="0.8"/>
<path d="M-1702.5,1063 L-150.0,930" stroke="#3f2912" stroke-width="2" stroke-opacity="0.8"/>
<path d="M-1638.8,1063 L-132.8,930" stroke="#3f2912" stroke-width="2" stroke-opacity="0.8"/>
<path d="M-1575.1,1063 L-115.7,930" stroke="#3f2912" stroke-width="2" stroke-opacity="0.8"/>
<path d="M-1511.4,1063 L-98.5,930" stroke="#3f2912" stroke-width="2" stroke-opacity="0.8"/>
<path d="M-1447.7,1063 L-81.4,930" stroke="#3f2912" stroke-width="2" stroke-opacity="0.8"/>
<path d="M-1384.0,1063 L-64.2,930" stroke="#3f2912" stroke-width="2" stroke-opacity="0.8"/>
<path d="M-1320.3,1063 L-47.1,930" stroke="#3f2912" stroke-width="2" stroke-opacity="0.8"/>
<path d="M-1256.6,1063 L-29.9,930" stroke="#3f2912" stroke-width="2" stroke-opacity="0.8"/>
<path d="M-1192.9,1063 L-12.8,930" stroke="#3f2912" stroke-width="2" stroke-opacity="0.8"/>
<path d="M-1129.2,1063 L4.4,930" stroke="#3f2912" stroke-width="2" stroke-opacity="0.8"/>
<path d="M-1065.5,1063 L21.5,930" stroke="#3f2912" stroke-width="2" stroke-opacity="0.8"/>
<path d="M-1001.8,1063 L38.7,930" stroke="#3f2912" stroke-width="2" stroke-opacity="0.8"/>
<path d="M-938.1,1063 L55.8,930" stroke="#3f2912" stroke-width="2" stroke-opacity="0.8"/>
<path d="M-874.4,1063 L73.0,930" stroke="#3f2912" stroke-width="2" stroke-opacity="0.8"/>
<path d="M-810.7,1063 L90.1,930" stroke="#3f2912" stroke-width="2" stroke-opacity="0.8"/>
<path d="M-747.0,1063 L107.3,930" stroke="#3f2912" stroke-width="2" stroke-opacity="0.8"/>
<path d="M-683.3,1063 L124.4,930" stroke="#3f2912" stroke-width="2" stroke-opacity="0.8"/>
<path d="M-619.6,1063 L141.6,930" stroke="#3f2912" stroke-width="2" stroke-opacity="0.8"/>
<path d="M-555.9,1063 L158.7,930" stroke="#3f2912" stroke-width="2" stroke-opacity="0.8"/>
<path d="M-492.2,1063 L175.9,930" stroke="#3f2912" stroke-width="2" stroke-opacity="0.8"/>
<path d="M-428.5,1063 L193.0,930" stroke="#3f2912" stroke-width="2" stroke-opacity="0.8"/>
<path d="M-364.8,1063 L210.2,930" stroke="#3f2912" stroke-width="2" stroke-opacity="0.8"/>
<path d="M-301.1,1063 L227.3,930" stroke="#3f2912" stroke-width="2" stroke-opacity="0.8"/>
<path d="M-237.4,1063 L244.5,930" stroke="#3f2912" stroke-width="2" stroke-opacity="0.8"/>
<path d="M-173.7,1063 L261.6,930" stroke="#3f2912" stroke-width="2" stroke-opacity="0.8"/>
<path d="M-110.0,1063 L278.8,930" stroke="#3f2912" stroke-width="2" stroke-opacity="0.8"/>
<path d="M-46.3,1063 L295.9,930" stroke="#3f2912" stroke-width="2" stroke-opacity="0.8"/>
<path d="M17.4,1063 L313.1,930" stroke="#3f2912" stroke-width="2" stroke-opacity="0.8"/>
<path d="M81.1,1063 L330.2,930" stroke="#3f2912" stroke-width="2" stroke-opacity="0.8"/>
<path d="M144.8,1063 L347.4,930" stroke="#3f2912" stroke-width="2" stroke-opacity="0.8"/>
<path d="M208.5,1063 L364.5,930" stroke="#3f2912" stroke-width="2" stroke-opacity="0.8"/>
<path d="M272.2,1063 L381.7,930" stroke="#3f2912" stroke-width="2" stroke-opacity="0.8"/>
<path d="M335.9,1063 L398.8,930" stroke="#3f2912" stroke-width="2" stroke-opacity="0.8"/>
<path d="M399.6,1063 L416.0,930" stroke="#3f2912" stroke-width="2" stroke-opacity="0.8"/>
<path d="M463.3,1063 L433.1,930" stroke="#3f2912" stroke-width="2" stroke-opacity="0.8"/>
<path d="M527.0,1063 L450.3,930" stroke="#3f2912" stroke-width="2" stroke-opacity="0.8"/>
<path d="M590.7,1063 L467.4,930" stroke="#3f2912" stroke-width="2" stroke-opacity="0.8"/>
<path d="M654.4,1063 L484.6,930" stroke="#3f2912" stroke-width="2" stroke-opacity="0.8"/>
<path d="M718.1,1063 L501.7,930" stroke="#3f2912" stroke-width="2" stroke-opacity="0.8"/>
<path d="M781.8,1063 L518.9,930" stroke="#3f2912" stroke-width="2" stroke-opacity="0.8"/>
<path d="M845.5,1063 L536.0,930" stroke="#3f2912" stroke-width="2" stroke-opacity="0.8"/>
<path d="M909.2,1063 L553.2,930" stroke="#3f2912" stroke-width="2" stroke-opacity="0.8"/>
<path d="M972.9,1063 L570.3,930" stroke="#3f2912" stroke-width="2" stroke-opacity="0.8"/>
<path d="M1036.6,1063 L587.5,930" stroke="#3f2912" stroke-width="2" stroke-opacity="0.8"/>
<path d="M1100.3,1063 L604.6,930" stroke="#3f2912" stroke-width="2" stroke-opacity="0.8"/>
<path d="M1164.0,1063 L621.8,930" stroke="#3f2912" stroke-width="2" stroke-opacity="0.8"/>
<path d="M1227.7,1063 L638.9,930" stroke="#3f2912" stroke-width="2" stroke-opacity="0.8"/>
<path d="M1291.4,1063 L656.1,930" stroke="#3f2912" stroke-width="2" stroke-opacity="0.8"/>
<path d="M1355.1,1063 L673.2,930" stroke="#3f2912" stroke-width="2" stroke-opacity="0.8"/>
<path d="M1418.8,1063 L690.4,930" stroke="#3f2912" stroke-width="2" stroke-opacity="0.8"/>
<path d="M1482.5,1063 L707.5,930" stroke="#3f2912" stroke-width="2" stroke-opacity="0.8"/>
<path d="M1546.2,1063 L724.7,930" stroke="#3f2912" stroke-width="2" stroke-opacity="0.8"/>
<path d="M1609.9,1063 L741.8,930" stroke="#3f2912" stroke-width="2" stroke-opacity="0.8"/>
<path d="M1673.6,1063 L759.0,930" stroke="#3f2912" stroke-width="2" stroke-opacity="0.8"/>
<path d="M1737.3,1063 L776.1,930" stroke="#3f2912" stroke-width="2" stroke-opacity="0.8"/>
<path d="M1801.0,1063 L793.3,930" stroke="#3f2912" stroke-width="2" stroke-opacity="0.8"/>
<path d="M1864.7,1063 L810.4,930" stroke="#3f2912" stroke-width="2" stroke-opacity="0.8"/>
<path d="M1928.4,1063 L827.6,930" stroke="#3f2912" stroke-width="2" stroke-opacity="0.8"/>
<path d="M1992.1,1063 L844.7,930" stroke="#3f2912" stroke-width="2" stroke-opacity="0.8"/>
<path d="M2055.8,1063 L861.9,930" stroke="#3f2912" stroke-width="2" stroke-opacity="0.8"/>
<path d="M2119.5,1063 L879.0,930" stroke="#3f2912" stroke-width="2" stroke-opacity="0.8"/>
<path d="M2183.2,1063 L896.2,930" stroke="#3f2912" stroke-width="2" stroke-opacity="0.8"/>
<path d="M2246.9,1063 L913.3,930" stroke="#3f2912" stroke-width="2" stroke-opacity="0.8"/>
<path d="M2310.6,1063 L930.5,930" stroke="#3f2912" stroke-width="2" stroke-opacity="0.8"/>
<path d="M2374.3,1063 L947.6,930" stroke="#3f2912" stroke-width="2" stroke-opacity="0.8"/>
<path d="M2438.0,1063 L964.8,930" stroke="#3f2912" stroke-width="2" stroke-opacity="0.8"/>
<path d="M2501.7,1063 L981.9,930" stroke="#3f2912" stroke-width="2" stroke-opacity="0.8"/>
<path d="M2565.4,1063 L999.1,930" stroke="#3f2912" stroke-width="2" stroke-opacity="0.8"/>
<path d="M2629.1,1063 L1016.2,930" stroke="#3f2912" stroke-width="2" stroke-opacity="0.8"/>
<path d="M2692.8,1063 L1033.4,930" stroke="#3f2912" stroke-width="2" stroke-opacity="0.8"/>
<path d="M2756.5,1063 L1050.5,930" stroke="#3f2912" stroke-width="2" stroke-opacity="0.8"/>
<path d="M2820.2,1063 L1067.7,930" stroke="#3f2912" stroke-width="2" stroke-opacity="0.8"/>
<path d="M2883.9,1063 L1084.8,930" stroke="#3f2912" stroke-width="2" stroke-opacity="0.8"/>
<path d="M2947.6,1063 L1102.0,930" stroke="#3f2912" stroke-width="2" stroke-opacity="0.8"/>
<rect x="15" y="899" width="780" height="95" fill="url(#gFog)"/>
<path d="M183,709.7 L262,708 L350,706.5 L480,701 L492.7,693.6 L527,695.5 L522,703 L515,713 L515,746.7 L480,750 L400,753.7 L300,756 L200,757 L195,750 L183,735 Z" fill="#0c2142"/>
<path d="M193,697 L262,699 L262,710 L193,712 Z" fill="#1c5276"/><path d="M200,688 L250,688 L256,694 L198,695 Z" fill="#0a2238"/><path d="M236,695 L246,695 L252,710 L238,710 Z" fill="#123a5a"/>
<path d="M287,708 L287,690 L292,690 L292,708 Z M296,708 L296,700 L299,700 L299,708 Z M321,707 V699 H324 V707 Z M365,705 V699 H368 V705 Z M400,704 V694 H404 V704 Z M420,702 V694 H424 V702 Z M380,696 L440,695 L440,697 L380,698 Z M455,701 L460,687 L474,687 L478,701 Z" fill="#123456"/>
<path d="M300,706 L340,705 M420,697 L470,696" stroke="#2a6a4a" stroke-width="0.8"/>
<path d="M185,725 L215,725.8 L280,733 L350,731 L410,721.5 L440,715.6 L470,714.2 L485,716 L515,727.4 L515,746.7 L480,750 L400,753.7 L300,756.5 L200,757.5 L190,745 Z" fill="url(#gHull)"/>
<path d="M480,716 L515,727.4 L515,746.7 L480,750 Z" fill="#151515" fill-opacity="0.55"/>
<path d="M183,721 L210,722.5 L213,727 L186,728.5 Z" fill="#8a2828"/>
<path d="M442,714.5 L484,714.5" stroke="#9a3a30" stroke-width="1.2"/>
<rect x="183" y="735" width="12" height="20" fill="#5c5c5c"/><path d="M202,737 L222,734 L223,747 L203,749 Z" fill="#4a4a4a"/>
<path d="M473,751 C477,810 481,880 485,925 C490,975 510,1030 548,1063" stroke="#a8a000" stroke-width="1.15" fill="none"/>
<path d="M705,748.5 V722 M705,748.5 H732 M705,748.5 L693,755" stroke="#00dd00" stroke-width="1.7" fill="none"/><path d="M702.2,726 L705,715.5 L707.8,726 Z M728,745.7 L738,748.5 L728,751.3 Z M697,750.5 L691,756.5 L699.5,754.5 Z" fill="#00dd00"/>
<text x="701" y="709.5" font-size="11.5" fill="#00dd00">Z</text><text x="746" y="752.8" font-size="11.5" fill="#00dd00">X</text><text x="685" y="761" font-size="7" fill="#00cc00">Y</text>
<path d="M672,748.5 H705 M676,746 L672,748.5 L676,751 M685,748.5 C687,753 690,753 692,748.5 C694,744 697,744 699,748.5" stroke="#20d0e0" stroke-width="1.5" fill="none"/>
</g>
<rect x="15" y="687" width="45" height="252" fill="#f0f0f0"/>
<rect x="17.5" y="814.5" width="42" height="40" fill="#cce4f7" stroke="#99c9ef"/>
<g transform="translate(0,472)"><path d="M35.7,249.7 C29,246 26,240 27.5,233 C29,226 34,223.5 38,223.5 C44,223.5 48.5,228 48.5,234 C48.5,237 47.8,240 47,242 L50.1,243.2 L42.2,249 L38.6,238.9 L42.5,240.5 C43.5,238 44,236 44,234 C44,230 41.5,227.5 38,227.5 C34,227.5 31,231 30.5,235 C30,241 32,246 35.7,249.7 Z" fill="url(#gPurp)"/><rect x="24.2" y="234" width="27.8" height="3.4" rx="1.7" fill="#1a88d8"/><rect x="42" y="233.5" width="3" height="4.4" fill="#7a1a7a" opacity="0.7"/><rect x="35.5" y="265.5" width="3.5" height="27" rx="1.7" fill="#1a88d8"/><path d="M24.2,277.8 C27,272 33,269.5 38.6,269.5 C45,269.5 50,273.5 50,279.2 C50,284.5 46,287.5 40,288.5 L31.4,289 L31.4,291.5 L25.3,284.3 L31.4,280 L31.4,283 L40,283.5 C44,283 46,281.5 46,279 C46,275.5 42.5,273.5 38.6,273.5 C33,273.5 27.5,275.5 24.2,277.8 Z" fill="url(#gPurp)"/><rect x="35.5" y="272" width="3.5" height="12" fill="#1a88d8"/><path d="M40.5,323.5 L48.5,332.8" stroke="#a87838" stroke-width="3.6" stroke-linecap="round"/><circle cx="35" cy="316" r="8.6" fill="#e2eefa" stroke="#6e6e6e" stroke-width="1.6"/><path d="M28.5,313 C31,311 39,311 41.5,313" stroke="#b8d4f0" stroke-width="1.2" fill="none"/><path d="M26.5,353 C24,356 24,363 26,366.5 C31,368.5 37,373 40.5,377.5 L47.5,349.5 C40,350 32,350.5 26.5,353 Z" fill="url(#gMeg)"/><ellipse cx="43.6" cy="363.5" rx="5.2" ry="13.8" transform="rotate(12 43.6 363.5)" fill="#2a98cc"/><ellipse cx="43.8" cy="364" rx="3.2" ry="11" transform="rotate(12 43.8 364)" fill="#c0c0c0"/><ellipse cx="44.6" cy="365" rx="1.5" ry="8" transform="rotate(12 44.6 365)" fill="#eeeeee"/><ellipse cx="37.5" cy="396" rx="11" ry="4" fill="#48b080"/><path d="M26.5,396 C28,402 33,407 34.5,410 V418 H40.5 V410 C42,407 47,402 48.5,396 C45,399 30,399 26.5,396 Z" fill="#2e8a5a"/><ellipse cx="36" cy="442" rx="12" ry="8.5" fill="#e6e6e6" stroke="#c89a68" stroke-width="1.6"/><circle cx="36" cy="442" r="6" fill="url(#gEye)"/><circle cx="34.5" cy="440.5" r="1.2" fill="#fff"/><path d="M33,456 L47,443" stroke="#f0a828" stroke-width="3.6"/><path d="M45.5,444.5 L48.5,441.5" stroke="#d84a28" stroke-width="3.6"/><path d="M33,456 L31.5,458.5" stroke="#555" stroke-width="1.2"/></g>
<rect x="795" y="687" width="2" height="409" fill="#ffffff"/>
<rect x="15" y="1063" width="782" height="1" fill="#ffffff"/>
<rect x="797" y="687" width="30" height="409" fill="#f0f0f0"/>
<rect x="15" y="1064" width="780" height="32" fill="#f0f0f0"/>
<polygon points="805.8,708.1 811.4,702.5 817.0,708.1 817.0,704.5 811.4,698.9 805.8,704.5" fill="#606060"/>
<polygon points="805.8,1076.8 811.4,1082.5 817.0,1076.8 817.0,1080.5 811.4,1086.2 805.8,1080.5" fill="#606060"/>
<polygon points="34.0,1075.0 30.3,1075.0 25.0,1080.5 30.3,1086.0 34.0,1086.0 28.7,1080.5" fill="#606060"/>
<polygon points="776.0,1075.0 779.7,1075.0 785.0,1080.5 779.7,1086.0 776.0,1086.0 781.3,1080.5" fill="#606060"/>
<rect x="390" y="1064" width="31" height="32" fill="#cdcdcd"/>
<rect x="796" y="877" width="31" height="30" fill="#cdcdcd"/>
<rect x="946" y="231" width="694" height="317" fill="#fff"/>
<path d="M1033.5,231 V548" stroke="#6a6a6a" stroke-width="1" stroke-dasharray="3.6 2.4"/>
<path d="M1120.5,231 V548" stroke="#6a6a6a" stroke-width="1" stroke-dasharray="3.6 2.4"/>
<path d="M1207.5,231 V548" stroke="#6a6a6a" stroke-width="1" stroke-dasharray="3.6 2.4"/>
<path d="M1293.5,231 V548" stroke="#6a6a6a" stroke-width="1" stroke-dasharray="3.6 2.4"/>
<path d="M1380.5,231 V548" stroke="#6a6a6a" stroke-width="1" stroke-dasharray="3.6 2.4"/>
<path d="M1467.5,231 V548" stroke="#6a6a6a" stroke-width="1" stroke-dasharray="3.6 2.4"/>
<path d="M1553.5,231 V548" stroke="#6a6a6a" stroke-width="1" stroke-dasharray="3.6 2.4"/>
<path d="M946,485.5 H1640" stroke="#6a6a6a" stroke-width="1" stroke-dasharray="3.6 2.4"/>
<path d="M946,421.5 H1640" stroke="#6a6a6a" stroke-width="1" stroke-dasharray="3.6 2.4"/>
<path d="M946,358.5 H1640" stroke="#6a6a6a" stroke-width="1" stroke-dasharray="3.6 2.4"/>
<path d="M946,294.5 H1640" stroke="#6a6a6a" stroke-width="1" stroke-dasharray="3.6 2.4"/>
<polyline points="979.4,235.6 991.5,245.9 1019.6,250.2 1060.7,258.7 1101.7,264.6 1119.6,271.5 1142.7,290.7 1160.6,306.1 1178.5,318.9 1204.2,330.4 1250,337.8 1293.4,342.4 1331.6,350 1372.4,364.1 1415.8,383.2 1466.8,404.9 1497.4,420 1523,431.9 1571.4,462.5 1594.4,481.6 1608.4,498.2 1612.2,507.1 1607,509.2 1591.8,516.8 1556,524.2 1505,533.9 1492.3,533.9 1510.2,518.6 1483.4,495.7 1480.9,488 1489.8,476.5 1517.9,463.8 1542,451 1548.5,440.8 1542,426.8 1519,416.5 1466.8,397.2 1415.8,383.2 1377.6,373 1308.7,357.7 1250,347.5 1204.2,338.9 1119.6,322.7 1070.9,312.5 1035,299.7 1019.6,292.8 1006.8,284.3 991.5,270.2 986.8,266.4 978.1,251 976.1,240.7 979.4,235.6" fill="none" stroke="#800000" stroke-width="1.15"/>
<rect x="946" y="231" width="694" height="317" fill="none" stroke="#000" stroke-width="1.6"/>
<path d="M946.0,548 V553.5" stroke="#555" stroke-width="1"/>
<path d="M954.7,548 V551.5" stroke="#555" stroke-width="1"/>
<path d="M963.4,548 V551.5" stroke="#555" stroke-width="1"/>
<path d="M972.0,548 V551.5" stroke="#555" stroke-width="1"/>
<path d="M980.7,548 V551.5" stroke="#555" stroke-width="1"/>
<path d="M989.4,548 V551.5" stroke="#555" stroke-width="1"/>
<path d="M998.0,548 V551.5" stroke="#555" stroke-width="1"/>
<path d="M1006.7,548 V551.5" stroke="#555" stroke-width="1"/>
<path d="M1015.4,548 V551.5" stroke="#555" stroke-width="1"/>
<path d="M1024.1,548 V551.5" stroke="#555" stroke-width="1"/>
<path d="M1032.8,548 V553.5" stroke="#555" stroke-width="1"/>
<path d="M1041.4,548 V551.5" stroke="#555" stroke-width="1"/>
<path d="M1050.1,548 V551.5" stroke="#555" stroke-width="1"/>
<path d="M1058.8,548 V551.5" stroke="#555" stroke-width="1"/>
<path d="M1067.5,548 V551.5" stroke="#555" stroke-width="1"/>
<path d="M1076.1,548 V551.5" stroke="#555" stroke-width="1"/>
<path d="M1084.8,548 V551.5" stroke="#555" stroke-width="1"/>
<path d="M1093.5,548 V551.5" stroke="#555" stroke-width="1"/>
<path d="M1102.2,548 V551.5" stroke="#555" stroke-width="1"/>
<path d="M1110.8,548 V551.5" stroke="#555" stroke-width="1"/>
<path d="M1119.5,548 V553.5" stroke="#555" stroke-width="1"/>
<path d="M1128.2,548 V551.5" stroke="#555" stroke-width="1"/>
<path d="M1136.8,548 V551.5" stroke="#555" stroke-width="1"/>
<path d="M1145.5,548 V551.5" stroke="#555" stroke-width="1"/>
<path d="M1154.2,548 V551.5" stroke="#555" stroke-width="1"/>
<path d="M1162.9,548 V551.5" stroke="#555" stroke-width="1"/>
<path d="M1171.5,548 V551.5" stroke="#555" stroke-width="1"/>
<path d="M1180.2,548 V551.5" stroke="#555" stroke-width="1"/>
<path d="M1188.9,548 V551.5" stroke="#555" stroke-width="1"/>
<path d="M1197.6,548 V551.5" stroke="#555" stroke-width="1"/>
<path d="M1206.2,548 V553.5" stroke="#555" stroke-width="1"/>
<path d="M1214.9,548 V551.5" stroke="#555" stroke-width="1"/>
<path d="M1223.6,548 V551.5" stroke="#555" stroke-width="1"/>
<path d="M1232.3,548 V551.5" stroke="#555" stroke-width="1"/>
<path d="M1241.0,548 V551.5" stroke="#555" stroke-width="1"/>
<path d="M1249.6,548 V551.5" stroke="#555" stroke-width="1"/>
<path d="M1258.3,548 V551.5" stroke="#555" stroke-width="1"/>
<path d="M1267.0,548 V551.5" stroke="#555" stroke-width="1"/>
<path d="M1275.7,548 V551.5" stroke="#555" stroke-width="1"/>
<path d="M1284.3,548 V551.5" stroke="#555" stroke-width="1"/>
<path d="M1293.0,548 V553.5" stroke="#555" stroke-width="1"/>
<path d="M1301.7,548 V551.5" stroke="#555" stroke-width="1"/>
<path d="M1310.3,548 V551.5" stroke="#555" stroke-width="1"/>
<path d="M1319.0,548 V551.5" stroke="#555" stroke-width="1"/>
<path d="M1327.7,548 V551.5" stroke="#555" stroke-width="1"/>
<path d="M1336.4,548 V551.5" stroke="#555" stroke-width="1"/>
<path d="M1345.0,548 V551.5" stroke="#555" stroke-width="1"/>
<path d="M1353.7,548 V551.5" stroke="#555" stroke-width="1"/>
<path d="M1362.4,548 V551.5" stroke="#555" stroke-width="1"/>
<path d="M1371.1,548 V551.5" stroke="#555" stroke-width="1"/>
<path d="M1379.8,548 V553.5" stroke="#555" stroke-width="1"/>
<path d="M1388.4,548 V551.5" stroke="#555" stroke-width="1"/>
<path d="M1397.1,548 V551.5" stroke="#555" stroke-width="1"/>
<path d="M1405.8,548 V551.5" stroke="#555" stroke-width="1"/>
<path d="M1414.5,548 V551.5" stroke="#555" stroke-width="1"/>
<path d="M1423.1,548 V551.5" stroke="#555" stroke-width="1"/>
<path d="M1431.8,548 V551.5" stroke="#555" stroke-width="1"/>
<path d="M1440.5,548 V551.5" stroke="#555" stroke-width="1"/>
<path d="M1449.2,548 V551.5" stroke="#555" stroke-width="1"/>
<path d="M1457.8,548 V551.5" stroke="#555" stroke-width="1"/>
<path d="M1466.5,548 V553.5" stroke="#555" stroke-width="1"/>
<path d="M1475.2,548 V551.5" stroke="#555" stroke-width="1"/>
<path d="M1483.8,548 V551.5" stroke="#555" stroke-width="1"/>
<path d="M1492.5,548 V551.5" stroke="#555" stroke-width="1"/>
<path d="M1501.2,548 V551.5" stroke="#555" stroke-width="1"/>
<path d="M1509.9,548 V551.5" stroke="#555" stroke-width="1"/>
<path d="M1518.5,548 V551.5" stroke="#555" stroke-width="1"/>
<path d="M1527.2,548 V551.5" stroke="#555" stroke-width="1"/>
<path d="M1535.9,548 V551.5" stroke="#555" stroke-width="1"/>
<path d="M1544.6,548 V551.5" stroke="#555" stroke-width="1"/>
<path d="M1553.2,548 V553.5" stroke="#555" stroke-width="1"/>
<path d="M1561.9,548 V551.5" stroke="#555" stroke-width="1"/>
<path d="M1570.6,548 V551.5" stroke="#555" stroke-width="1"/>
<path d="M1579.3,548 V551.5" stroke="#555" stroke-width="1"/>
<path d="M1588.0,548 V551.5" stroke="#555" stroke-width="1"/>
<path d="M1596.6,548 V551.5" stroke="#555" stroke-width="1"/>
<path d="M1605.3,548 V551.5" stroke="#555" stroke-width="1"/>
<path d="M1614.0,548 V551.5" stroke="#555" stroke-width="1"/>
<path d="M1622.7,548 V551.5" stroke="#555" stroke-width="1"/>
<path d="M1631.3,548 V551.5" stroke="#555" stroke-width="1"/>
<path d="M1640.0,548 V553.5" stroke="#555" stroke-width="1"/>
<path d="M941,548.0 H946" stroke="#555" stroke-width="1"/>
<path d="M943,516.3 H946" stroke="#555" stroke-width="1"/>
<path d="M941,484.6 H946" stroke="#555" stroke-width="1"/>
<path d="M943,452.9 H946" stroke="#555" stroke-width="1"/>
<path d="M941,421.2 H946" stroke="#555" stroke-width="1"/>
<path d="M943,389.5 H946" stroke="#555" stroke-width="1"/>
<path d="M941,357.8 H946" stroke="#555" stroke-width="1"/>
<path d="M943,326.1 H946" stroke="#555" stroke-width="1"/>
<path d="M941,294.4 H946" stroke="#555" stroke-width="1"/>
<path d="M943,262.7 H946" stroke="#555" stroke-width="1"/>
<path d="M941,231.0 H946" stroke="#555" stroke-width="1"/>
<text x="946.8" y="575.1" font-size="18" fill="#000" text-anchor="middle">2</text>
<text x="1033.4" y="575.1" font-size="18" fill="#000" text-anchor="middle">3</text>
<text x="1120.0" y="575.1" font-size="18" fill="#000" text-anchor="middle">4</text>
<text x="1206.7" y="575.1" font-size="18" fill="#000" text-anchor="middle">5</text>
<text x="1293.3" y="575.1" font-size="18" fill="#000" text-anchor="middle">6</text>
<text x="1379.9" y="575.1" font-size="18" fill="#000" text-anchor="middle">7</text>
<text x="1466.5" y="575.1" font-size="18" fill="#000" text-anchor="middle">8</text>
<text x="1553.2" y="575.1" font-size="18" fill="#000" text-anchor="middle">9</text>
<text x="1639.8" y="575.1" font-size="18" fill="#000" text-anchor="middle">10</text>
<text x="938.3" y="554.8" font-size="18" fill="#000" text-anchor="end">80</text>
<text x="938.3" y="491.4" font-size="18" fill="#000" text-anchor="end">100</text>
<text x="938.3" y="428.0" font-size="18" fill="#000" text-anchor="end">120</text>
<text x="938.3" y="364.6" font-size="18" fill="#000" text-anchor="end">140</text>
<text x="938.3" y="301.2" font-size="18" fill="#000" text-anchor="end">160</text>
<text x="938.3" y="237.8" font-size="18" fill="#000" text-anchor="end">180</text>
<text x="1014.0" y="600.8" font-size="18.2" fill="#000" textLength="554.4" lengthAdjust="spacingAndGlyphs">Catenary Hose End force Ez angle (deg) at end A, t = 28.0 to 35.0s</text>
<g clip-path="url(#clipTRc)">
<text transform="translate(895.2,543.2) rotate(-90)" x="0" y="0" font-size="18.5" fill="#000" textLength="388.9" lengthAdjust="spacingAndGlyphs">Hose End force (kN) at end A, t = 28.0 to 35.0s</text>
<text transform="translate(895.2,626.5) rotate(-90)" x="0" y="0" font-size="18.5" fill="#000" textLength="78.8" lengthAdjust="spacingAndGlyphs">Catenary</text>
</g>
<rect x="940" y="754" width="700" height="267" fill="#fff"/>
<path d="M1048.5,754 V1021" stroke="#6a6a6a" stroke-width="1" stroke-dasharray="3.6 2.4"/>
<path d="M1156.5,754 V1021" stroke="#6a6a6a" stroke-width="1" stroke-dasharray="3.6 2.4"/>
<path d="M1263.5,754 V1021" stroke="#6a6a6a" stroke-width="1" stroke-dasharray="3.6 2.4"/>
<path d="M1371.5,754 V1021" stroke="#6a6a6a" stroke-width="1" stroke-dasharray="3.6 2.4"/>
<path d="M1478.5,754 V1021" stroke="#6a6a6a" stroke-width="1" stroke-dasharray="3.6 2.4"/>
<path d="M1586.5,754 V1021" stroke="#6a6a6a" stroke-width="1" stroke-dasharray="3.6 2.4"/>
<path d="M940,954.5 H1640" stroke="#6a6a6a" stroke-width="1" stroke-dasharray="3.6 2.4"/>
<path d="M940,888.5 H1640" stroke="#6a6a6a" stroke-width="1" stroke-dasharray="3.6 2.4"/>
<path d="M940,821.5 H1640" stroke="#6a6a6a" stroke-width="1" stroke-dasharray="3.6 2.4"/>
<rect x="940" y="754" width="700" height="267" fill="none" stroke="#000" stroke-width="1.6"/>
<path d="M941.0,1021 V1026.5" stroke="#555" stroke-width="1"/>
<path d="M994.7,1021 V1024.5" stroke="#555" stroke-width="1"/>
<path d="M1048.4,1021 V1026.5" stroke="#555" stroke-width="1"/>
<path d="M1102.1,1021 V1024.5" stroke="#555" stroke-width="1"/>
<path d="M1155.8,1021 V1026.5" stroke="#555" stroke-width="1"/>
<path d="M1209.5,1021 V1024.5" stroke="#555" stroke-width="1"/>
<path d="M1263.2,1021 V1026.5" stroke="#555" stroke-width="1"/>
<path d="M1317.0,1021 V1024.5" stroke="#555" stroke-width="1"/>
<path d="M1370.7,1021 V1026.5" stroke="#555" stroke-width="1"/>
<path d="M1424.4,1021 V1024.5" stroke="#555" stroke-width="1"/>
<path d="M1478.1,1021 V1026.5" stroke="#555" stroke-width="1"/>
<path d="M1531.8,1021 V1024.5" stroke="#555" stroke-width="1"/>
<path d="M1585.5,1021 V1026.5" stroke="#555" stroke-width="1"/>
<path d="M1639.2,1021 V1024.5" stroke="#555" stroke-width="1"/>
<path d="M935,1021.0 H940" stroke="#555" stroke-width="1"/>
<path d="M937,987.6 H940" stroke="#555" stroke-width="1"/>
<path d="M935,954.2 H940" stroke="#555" stroke-width="1"/>
<path d="M937,920.9 H940" stroke="#555" stroke-width="1"/>
<path d="M935,887.5 H940" stroke="#555" stroke-width="1"/>
<path d="M937,854.1 H940" stroke="#555" stroke-width="1"/>
<path d="M935,820.8 H940" stroke="#555" stroke-width="1"/>
<path d="M937,787.4 H940" stroke="#555" stroke-width="1"/>
<path d="M935,754.0 H940" stroke="#555" stroke-width="1"/>
<polyline points="940,754 1312.5,754 1326.5,762.1 1343.1,895.5 1359.7,921 1377.6,867.2 1392.9,754 1521.7,754 1524.2,762.7 1528,887.9 1529.8,921 1547.2,921" fill="none" stroke="#008000" stroke-width="1.6"/>
<polyline points="940.2,923.3 955.6,918.2 971,921.3 1004.3,920.2 1019.6,914.8 1035,912.3 1047.8,914.8 1068.3,922.5 1086.3,921.3 1099.1,923.8 1117,936.1 1132.4,934.6 1150.3,935.4 1168.3,922.5 1183.7,915.6 1201.6,912.3 1222.1,910.5 1262.8,910.3 1278,913.4 1296,927.4 1311.2,924.8 1326.5,936.3 1343.1,963.1 1359.7,969.5 1377.6,964.4 1392.9,954.2 1408.2,939.4 1423.5,933.8 1433.7,931.2 1443.9,921 1454.1,895.5 1461.7,873.6 1466.8,846.8 1477,823.9 1479.6,826.4 1488.5,818.8 1502.6,849.4 1515.3,868.5 1521.7,895.5 1528,935 1547.2,922.3 1639,921" fill="none" stroke="#800000" stroke-width="1.15"/>
<polyline points="940,1020.5 1477,1020.5 1482,1018 1487,1021 1492,1017.5 1497,1021 1503,1018 1510,1021 1518,1019 1524,1021 1531.9,1020.5 1547.2,922.3" fill="none" stroke="#0000ff" stroke-width="1.5"/>
<text x="941.0" y="1048.0" font-size="18" fill="#000" text-anchor="middle">0</text>
<text x="1048.4" y="1048.0" font-size="18" fill="#000" text-anchor="middle">20</text>
<text x="1155.8" y="1048.0" font-size="18" fill="#000" text-anchor="middle">40</text>
<text x="1263.2" y="1048.0" font-size="18" fill="#000" text-anchor="middle">60</text>
<text x="1370.7" y="1048.0" font-size="18" fill="#000" text-anchor="middle">80</text>
<text x="1478.1" y="1048.0" font-size="18" fill="#000" text-anchor="middle">100</text>
<text x="1585.5" y="1048.0" font-size="18" fill="#000" text-anchor="middle">120</text>
<text x="931.7" y="1027.9" font-size="18" fill="#000" text-anchor="end">0.4</text>
<text x="931.7" y="961.1" font-size="18" fill="#000" text-anchor="end">0.6</text>
<text x="931.7" y="894.4" font-size="18" fill="#000" text-anchor="end">0.8</text>
<text x="931.7" y="827.6" font-size="18" fill="#000" text-anchor="end">1</text>
<text x="931.7" y="760.9" font-size="18" fill="#000" text-anchor="end">1.2</text>
<text x="1228.0" y="1073.8" font-size="18.2" fill="#000" textLength="120.0" lengthAdjust="spacingAndGlyphs">Arc length (m)</text>
<rect x="1042.5" y="705.5" width="493" height="33" fill="#fff" stroke="#000" stroke-width="1.3"/>
<path d="M1048,723 H1108" stroke="#0000ff" stroke-width="2"/><path d="M1211,723 H1271" stroke="#008000" stroke-width="2"/><path d="M1374,723 H1434" stroke="#800000" stroke-width="2"/>
<text x="1116.0" y="729.0" font-size="18" fill="#000" textLength="82.0" lengthAdjust="spacingAndGlyphs">Minimum</text>
<text x="1278.7" y="729.0" font-size="18" fill="#000" textLength="85.3" lengthAdjust="spacingAndGlyphs">Maximum</text>
<text x="1441.8" y="729.0" font-size="18" fill="#000" textLength="47.5" lengthAdjust="spacingAndGlyphs">Mean</text>
<g clip-path="url(#clipBRc)">
<text transform="translate(895.2,1016.6) rotate(-90)" x="0" y="0" font-size="18.5" fill="#000" textLength="344.0" lengthAdjust="spacingAndGlyphs">Hose x drag coefficient, t = 28.0 to 35.0s</text>
<text transform="translate(895.2,1099.5) rotate(-90)" x="0" y="0" font-size="18.5" fill="#000" textLength="78.4" lengthAdjust="spacingAndGlyphs">Catenary</text>
</g>
</svg>
</body></html>
